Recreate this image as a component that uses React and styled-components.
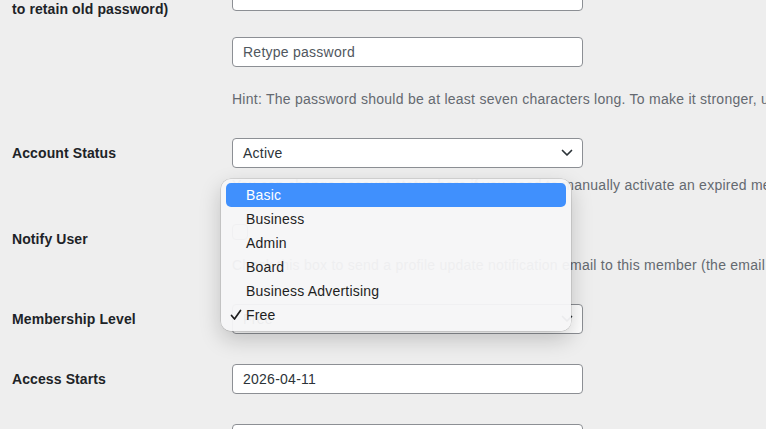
import React from 'react';
import styled, { createGlobalStyle } from 'styled-components';

const GlobalStyle = createGlobalStyle`
  html, body {
    margin: 0;
    padding: 0;
    background: #eeeeee;
    overflow: hidden;
  }
  body {
    font-family: "Liberation Sans", Arial, sans-serif;
    color: #1d2327;
  }
`;

const Page = styled.div`
  width: 766px;
  height: 429px;
  overflow: hidden;
`;

// the page is scrolled: the top of the password row is above the window
const FormTable = styled.div`
  margin-top: -34px;
  padding-left: 12px;
  display: flex;
  flex-direction: column;
`;

const Row = styled.div`
  display: grid;
  grid-template-columns: 220px 1fr;
`;

const Label = styled.div`
  padding-top: ${(p) => p.$top || 21}px;
  font-size: 14px;
  font-weight: 700;
  line-height: 18px;
  letter-spacing: 0.1px;
  color: #1d2327;
`;

const Field = styled.div`
  padding: 15px 0;
  display: flex;
  flex-direction: column;
  align-items: flex-start;
  min-width: 0;
`;

const TextInput = styled.div`
  box-sizing: border-box;
  width: 351px;
  height: 30px;
  margin-top: ${(p) => p.$gap || 0}px;
  padding: 0 10px;
  display: flex;
  align-items: center;
  background: #fff;
  border: 1px solid #8c8f94;
  border-radius: 4px;
  font-size: 14px;
  letter-spacing: 0.25px;
  color: ${(p) => (p.$placeholder ? '#50575e' : '#2c3338')};
`;

const SelectBox = styled(TextInput)`
  position: relative;
  justify-content: space-between;
  padding-right: 9px;
`;

const Description = styled.p`
  margin: ${(p) => p.$gap || 8}px 0 0;
  font-size: 14px;
  line-height: 18px;
  letter-spacing: 0.25px;
  color: #646970;
  white-space: nowrap;
`;

const Checkbox = styled.span`
  display: block;
  box-sizing: border-box;
  width: 16px;
  height: 16px;
  background: #fff;
  border: 1px solid #8c8f94;
  border-radius: 4px;
`;

const Popup = styled.div`
  position: absolute;
  left: -12px;
  top: -126px;
  width: 350px;
  box-sizing: border-box;
  padding: 4px 5px;
  background: rgba(246, 246, 247, 0.95);
  border-radius: 10px;
  box-shadow: 0 0 0 0.5px rgba(0, 0, 0, 0.18), 0 8px 22px rgba(0, 0, 0, 0.2);
  z-index: 5;
  letter-spacing: 0.2px;
`;

const Option = styled.div`
  position: relative;
  height: 24px;
  display: flex;
  align-items: center;
  padding-left: 20px;
  border-radius: 5px;
  font-size: 14px;
  color: ${(p) => (p.$active ? '#fff' : '#1e1e1e')};
  background: ${(p) => (p.$active ? '#4090fd' : 'transparent')};
`;

const Check = styled.svg`
  position: absolute;
  left: 4px;
  top: 6px;
`;

const Chevron = () => (
  <svg width="12" height="8" viewBox="0 0 12 8" fill="none">
    <path d="M1.5 1.5 L6 6 L10.5 1.5" stroke="#2c3338" strokeWidth="1.7" strokeLinecap="round" strokeLinejoin="round" />
  </svg>
);

const levels = ['Basic', 'Business', 'Admin', 'Board', 'Business Advertising', 'Free'];

const App = () => (
  <Page>
    <GlobalStyle />
    <FormTable>
      <Row>
        <Label $top={16}>
          New Password (leave blank
          <br />
          to retain old password)
        </Label>
        <Field>
          <TextInput />
          <TextInput $gap={26} $placeholder>Retype password</TextInput>
          <Description $gap={23}>
            Hint: The password should be at least seven characters long. To make it stronger, use upper and lower case letters.
          </Description>
        </Field>
      </Row>

      <Row>
        <Label>Account Status</Label>
        <Field>
          <SelectBox>
            Active
            <Chevron />
          </SelectBox>
          <Description>
            You can change account status here if you need to manually activate an expired membership.
          </Description>
        </Field>
      </Row>

      <Row>
        <Label>Notify User</Label>
        <Field>
          <Checkbox />
          <Description $gap={16}>
            Check this box to send a profile update notification email to this member (the email will include the new status).
          </Description>
        </Field>
      </Row>

      <Row>
        <Label>Membership Level</Label>
        <Field>
          <SelectBox>
            Free
            <Chevron />
            <Popup>
              {levels.map((lvl, i) => (
                <Option key={lvl} $active={i === 0}>
                  {lvl === 'Free' && (
                    <Check width="12" height="12" viewBox="0 0 12 12" fill="none">
                      <path d="M1.5 6.5 L4.5 10 L10.5 1.5" stroke="#1e1e1e" strokeWidth="1.7" strokeLinecap="round" strokeLinejoin="round" />
                    </Check>
                  )}
                  {lvl}
                </Option>
              ))}
            </Popup>
          </SelectBox>
        </Field>
      </Row>

      <Row>
        <Label>Access Starts</Label>
        <Field>
          <TextInput>2026-04-11</TextInput>
        </Field>
      </Row>

      <Row>
        <Label>Access Expires</Label>
        <Field>
          <TextInput />
        </Field>
      </Row>
    </FormTable>
  </Page>
);

export default App;
